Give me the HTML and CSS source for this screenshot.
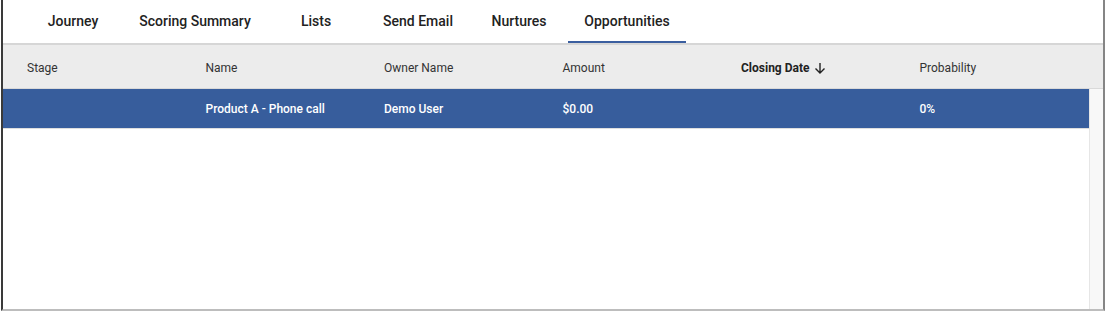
FILE: index.html
```html
<!DOCTYPE html>
<html lang="en">
  <head>
    <meta charset="UTF-8" />
    <meta name="viewport" content="width=device-width, initial-scale=1.0" />
    <title>Opportunities</title>
    <link rel="stylesheet" href="styles.css">
  </head>
  <body>
    <div class="panel">
      <ul class="tabs">
        <li class="tab tab-journey">Journey</li>
        <li class="tab tab-scoring">Scoring Summary</li>
        <li class="tab tab-lists">Lists</li>
        <li class="tab tab-email">Send Email</li>
        <li class="tab tab-nurtures">Nurtures</li>
        <li class="tab tab-opps active">Opportunities</li>
      </ul>

      <div class="grid-head">
        <div class="cell">Stage</div>
        <div class="cell">Name</div>
        <div class="cell">Owner Name</div>
        <div class="cell">Amount</div>
        <div class="cell sorted">
          Closing Date
          <svg class="sort-icon" width="12" height="12" viewBox="0 0 12 12">
            <path d="M6 1v10M1.5 6.5L6 11l4.5-4.5" fill="none" stroke="#222" stroke-width="1.4"/>
          </svg>
        </div>
        <div class="cell">Probability</div>
      </div>

      <div class="grid-body">
        <div class="rows">
          <div class="row selected">
            <div class="cell"></div>
            <div class="cell">Product A - Phone call</div>
            <div class="cell">Demo User</div>
            <div class="cell">$0.00</div>
            <div class="cell"></div>
            <div class="cell">0%</div>
          </div>
        </div>
        <div class="scroll-track"></div>
      </div>
    </div>
  </body>
</html>
```

FILE: styles.css
```css
:root {
  --tab-blue: #3a5e9f;
  --row-blue: #375d9c;
  --head-bg: #ececec;
  --col-width: 178.5px;
}

body {
  margin: 0;
  padding: 0;
  background: #fff;
  font-family: Roboto, "Noto Sans", sans-serif;
  color: #222;
}

.panel {
  margin-left: 1px;
  width: 1100px;
  height: 309px;
  border-left: 2px solid #3a3a3a;
  border-right: 2px solid #858585;
  border-bottom: 2px solid #bdbdbd;
  display: flex;
  flex-direction: column;
}

/* Tabs */
.tabs {
  list-style: none;
  margin: 0;
  padding: 0 0 0 28px;
  height: 43px;
  display: flex;
  border-bottom: 2px solid #d6d6d6;
}

.tab {
  box-sizing: border-box;
  height: 43px;
  display: flex;
  align-items: center;
  justify-content: center;
  font-size: 14px;
  font-weight: 500;
  color: #222;
  padding: 0 0 2px;
}

.tab-journey { width: 84px; margin-right: 7px; }
.tab-scoring { width: 146px; margin-right: 7px; }
.tab-lists { width: 82px; margin-right: 8px; }
.tab-email { width: 106px; margin-right: 3px; }
.tab-nurtures { width: 90px; margin-right: 4px; }
.tab-opps { width: 118px; }

.tab.active {
  border-bottom: 2px solid var(--tab-blue);
  padding-bottom: 0;
}

/* Grid */
.grid-head {
  box-sizing: border-box;
  height: 44px;
  padding-top: 2px;
  background: var(--head-bg);
  border-bottom: 1px solid #d9d9d9;
  display: flex;
  align-items: center;
  font-size: 12px;
  color: #333;
}

.cell {
  box-sizing: border-box;
  width: var(--col-width);
  flex-shrink: 0;
  padding-left: 24px;
  display: flex;
  align-items: center;
}

.sorted {
  font-weight: 700;
  color: #222;
}

.sort-icon {
  margin-left: 5px;
}

.grid-body {
  flex: 1;
  display: flex;
}

.rows {
  flex: 1;
}

.row {
  height: 39px;
  display: flex;
  align-items: center;
  border-bottom: 1px solid #dedede;
  font-size: 12px;
  font-weight: 500;
}

.row.selected {
  background: var(--row-blue);
  color: #fff;
}

.scroll-track {
  width: 13px;
  background: #f8f8f8;
  border-left: 1px solid #e6e6e6;
}
```
